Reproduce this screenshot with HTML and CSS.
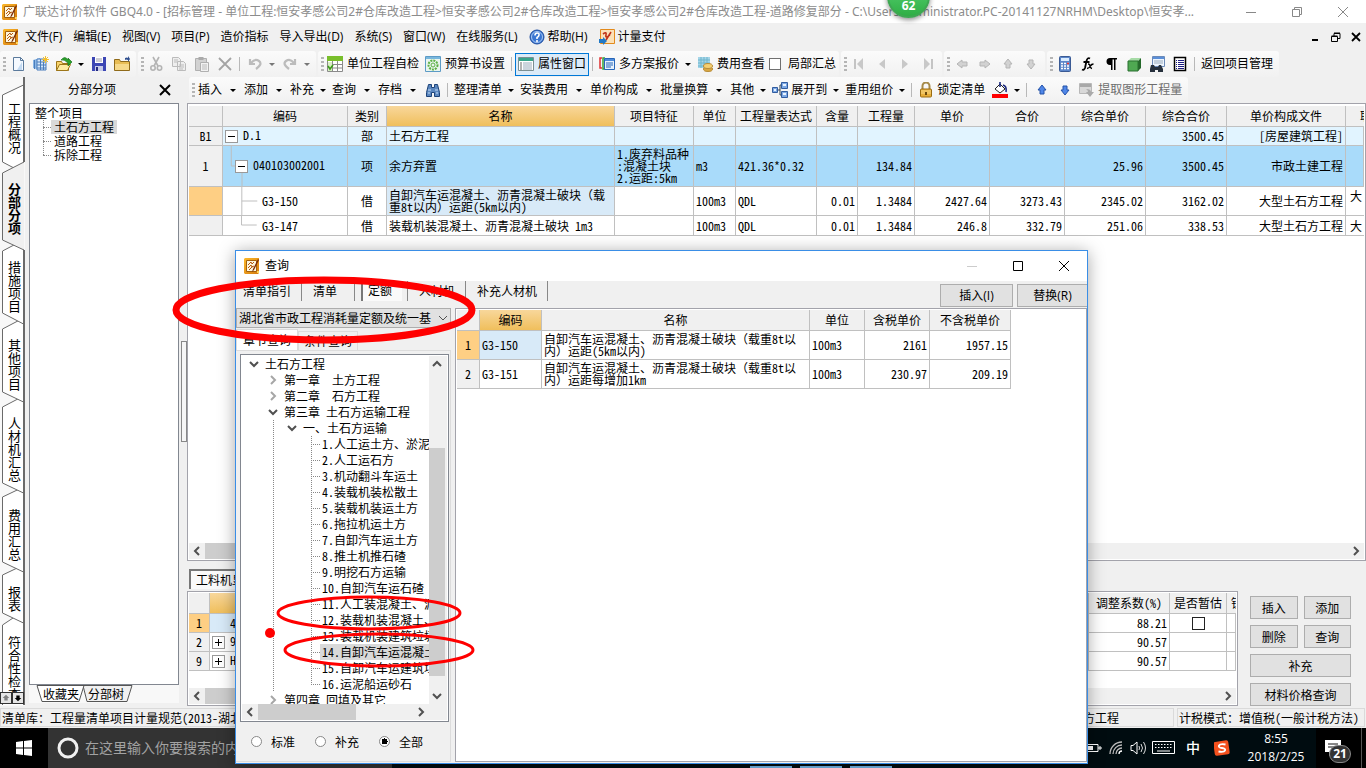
FILE: index.html
```html
<!DOCTYPE html>
<html lang="zh-CN">
<head>
<meta charset="utf-8">
<title>广联达计价软件 GBQ4.0</title>
<link rel="stylesheet" href="styles.css">
</head>
<body>
<svg class="defs" aria-hidden="true">
  <defs>
    <linearGradient id="gold" x1="0" y1="0" x2="1" y2="1"><stop offset="0" stop-color="#fbb829"/><stop offset="1" stop-color="#d67a0e"/></linearGradient>
    <symbol id="i-app" viewBox="0 0 16 16"><path d="M1 0h14v15l-1 1H1L0 15V1z" fill="url(#gold)"/><path d="M2.500 2.500h10v11h-10z" fill="#fdf6df" stroke="#a4600c"/><path d="M4 7l3-3 1 2 2-2M4 10l3-3 1 2 2-1M5 12l4-4" stroke="#b55a10" fill="none"/><path d="M14 1L9 11l-1 3 2-2 5-10z" fill="#7a2a08"/><path d="M13 13h2v2h-2z" fill="#ffd65a"/></symbol>
    <symbol id="i-new" viewBox="0 0 16 16"><path d="M3.500 1.500h7l3 3v10h-10z" fill="#f4f9ff" stroke="#5b7a9c"/><path d="M10.500 1.500v3h3" fill="none" stroke="#5b7a9c"/><path d="M12 6v8H7z" fill="#c3daf2"/></symbol>
    <symbol id="i-grid" viewBox="0 0 16 16"><path d="M0 4l7-2v12l-7-2z" fill="#8ab6e6"/><path d="M4 3h9v11H4z" fill="#d7e8fa" stroke="#4b7dbb"/><path d="M7.500 3v11M10.500 3v11M4 6h9M4 9h9M4 12h9M1.500 4v9" stroke="#4b7dbb"/><path d="M12.500 0v7M9 3.500h7M10 1l5 5M15 1l-5 5" stroke="#f5c02b"/></symbol>
    <symbol id="i-open" viewBox="0 0 16 16"><path d="M.5 14.500V5.500h5l1 2h6v7z" fill="#f8d36b" stroke="#9c7518"/><path d="M.5 14.500l3-6h11l-3 6z" fill="#fdeba0" stroke="#9c7518"/><path d="M5 4q4-5 7 0V2l4 4-4 4V7Q8 3 5 4z" fill="#2ba12b" stroke="#0e6b14" stroke-width=".6"/></symbol>
    <symbol id="i-save" viewBox="0 0 16 16"><path d="M1 1h14v14H1z" fill="#3c46b4"/><path d="M4 1h8v6H4z" fill="#fff"/><path d="M5 3h6M5 5h6" stroke="#99a"/><path d="M4 10h8v5H4z" fill="#c7cbe8"/><path d="M5 11h2v4H5z" fill="#23297e"/></symbol>
    <symbol id="i-folder" viewBox="0 0 16 16"><path d="M.5 14.500v-11h5l1 2h9v9z" fill="#e8bd55" stroke="#8f6a1a"/><path d="M1 8h14v6H1z" fill="#f6d98a"/><path d="M11 2q2-1 3 0V0l2 3-2 3V4q-2-1-3 0z" fill="#2f4f8f"/></symbol>
    <symbol id="i-cut" viewBox="0 0 16 16"><path d="M5 1l5 9M11 1L6 10" stroke="#b4b4b4" stroke-width="1.600"/><circle cx="5" cy="12" r="2.200" fill="none" stroke="#b4b4b4" stroke-width="1.600"/><circle cx="11.500" cy="12" r="2.200" fill="none" stroke="#b4b4b4" stroke-width="1.600"/></symbol>
    <symbol id="i-copy" viewBox="0 0 16 16"><path d="M1.500 1.500h6l2 2v7h-8zM6.500 5.500h6l2 2v7h-8z" fill="#eee" stroke="#bbb"/><path d="M8 9h5M8 11h5M8 13h4M3 4h4M3 6h3" stroke="#bbb"/></symbol>
    <symbol id="i-paste" viewBox="0 0 16 16"><path d="M1.500 2.500h11v12h-11z" fill="#d2d2d2" stroke="#b0b0b0"/><path d="M4.500 1h5v3h-5z" fill="#aaa"/><path d="M6.500 6.500h8v9h-8z" fill="#f2f2f2" stroke="#b0b0b0"/><path d="M8 9h5M8 11h5M8 13h5" stroke="#bbb"/></symbol>
    <symbol id="i-x" viewBox="0 0 16 16"><path d="M2 2l12 12M14 2L2 14" stroke="#a4a4a4" stroke-width="1.800"/></symbol>
    <symbol id="i-undo" viewBox="0 0 16 16"><path d="M3 3v5h5M4 7q4-5 8-2t-3 8" fill="none" stroke="#bcbcbc" stroke-width="2.200"/></symbol>
    <symbol id="i-redo" viewBox="0 0 16 16"><path d="M13 3v5H8M12 7Q8 2 4 5t3 8" fill="none" stroke="#bcbcbc" stroke-width="2.200"/></symbol>
    <symbol id="i-check" viewBox="0 0 16 16"><path d="M.5 4.500h15v11H.5z" fill="#fff" stroke="#8a8a8a"/><path d="M.5 8.500h15M.5 12h15M5.500 5v11M10.500 5v11" fill="none" stroke="#8a8a8a"/><path d="M0 0h16v5H0z" fill="#79bf2c"/><path d="M1 6h4v9H1z" fill="#d9f0c4"/><path d="M1 10l2 3 3-4" fill="none" stroke="#3e9b1c" stroke-width="1.600"/></symbol>
    <symbol id="i-gear" viewBox="0 0 16 16"><path d="M.5.5h15v15H.5z" fill="#e9f5ef" stroke="#5c9bc6"/><path d="M1 1h14v2H1z" fill="#79b7dd"/><circle cx="8" cy="9" r="4.500" fill="none" stroke="#5bb043" stroke-width="2" stroke-dasharray="2 1"/><circle cx="8" cy="9" r="2" fill="none" stroke="#5bb043"/></symbol>
    <symbol id="i-prop" viewBox="0 0 16 16"><path d="M.5 1.500h15v13H.5z" fill="#fff" stroke="#7b8f93"/><path d="M1 2h14v3H1z" fill="#38a58c"/><path d="M2 7h2M2 9h2M2 11h2M2 13h2" stroke="#666"/><path d="M5 7h9M5 9h9M5 11h9M5 13h9" stroke="#9ab"/></symbol>
    <symbol id="i-multi" viewBox="0 0 16 16"><path d="M3 2H1v10h2" fill="none" stroke="#df3030" stroke-width="1.500"/><path d="M6 2H4v11h2" fill="none" stroke="#36a336" stroke-width="1.500"/><path d="M5.500 2.500h10v11h-10z" fill="#e6f1fc" stroke="#2766b8"/><path d="M6 3h9v2H6z" fill="#4d8bdb"/><path d="M7 7h7M7 9h7M7 11h5" stroke="#2766b8"/></symbol>
    <symbol id="i-cost" viewBox="0 0 16 16"><path d="M1 1h12v11H1z" fill="#a5d5e8"/><path d="M1 4h12M1 7h12M1 10h12M4 1v11M7 1v11M10 1v11" stroke="#6eb5cc"/><ellipse cx="11" cy="13" rx="4.500" ry="2.500" fill="#d9a844" stroke="#b98c38"/><ellipse cx="11" cy="10" rx="4.500" ry="2.500" fill="#f3cf72" stroke="#b98c38"/></symbol>
    <symbol id="i-first" viewBox="0 0 16 16"><path d="M4 3v10" stroke="#c4c4c4" stroke-width="2"/><path d="M12 2v12L6 8z" fill="#c8c8c8"/></symbol>
    <symbol id="i-prev" viewBox="0 0 16 16"><path d="M11 3v10L5 8z" fill="#c8c8c8"/></symbol>
    <symbol id="i-next" viewBox="0 0 16 16"><path d="M5 3v10l6-5z" fill="#c8c8c8"/></symbol>
    <symbol id="i-last" viewBox="0 0 16 16"><path d="M12 3v10" stroke="#c4c4c4" stroke-width="2"/><path d="M4 2v12l6-6z" fill="#c8c8c8"/></symbol>
    <symbol id="i-left" viewBox="0 0 16 16"><path d="M3 8l5-4v2h5v4H8v2z" fill="#d2d2d2" stroke="#b5b5b5"/></symbol>
    <symbol id="i-right" viewBox="0 0 16 16"><path d="M13 8L8 4v2H3v4h5v2z" fill="#d2d2d2" stroke="#b5b5b5"/></symbol>
    <symbol id="i-up" viewBox="0 0 16 16"><path d="M8 3l4 5h-2v4H6V8H4z" fill="var(--f,#d2d2d2)" stroke="var(--s,#b5b5b5)"/></symbol>
    <symbol id="i-down" viewBox="0 0 16 16"><path d="M8 13l4-5h-2V4H6v4H4z" fill="var(--f,#d2d2d2)" stroke="var(--s,#b5b5b5)"/></symbol>
    <symbol id="i-calc" viewBox="0 0 16 16"><rect x="2.500" y=".5" width="11" height="15" rx="1" fill="#5c86c9" stroke="#3a5a94"/><path d="M4 2h8v3H4z" fill="#d9ecff"/><path d="M4 7.500h8M4 10h8M4 12.500h8" stroke="#fff" stroke-width="1.500" stroke-dasharray="2 1"/><path d="M10 7.500h2" stroke="#e33" stroke-width="1.500"/></symbol>
    <symbol id="i-fx" viewBox="0 0 16 16"><path d="M10 2.500Q7.500 1 6.500 5L5 12q-1 2.500-3 1.500M3.500 6h6" fill="none" stroke="#000" stroke-width="1.800"/><path d="M8 8q2 0 2 2t2 2.500M13.500 8q-2 0-3 2t-3.500 2.500" fill="none" stroke="#000" stroke-width="1.400"/></symbol>
    <symbol id="i-para" viewBox="0 0 16 16"><path d="M14 2H7a3 3 0 000 7h1v5h1.500V3.500H11V14h1.500V3.500H14z" fill="#000"/></symbol>
    <symbol id="i-cube" viewBox="0 0 16 16"><path d="M2 5l3-3h10l-3 3z" fill="#a6dba6"/><path d="M2 5h10v10H2z" fill="#4fa852"/><path d="M12 5l3-3v10l-3 3z" fill="#24682a"/><path d="M2 5h10v10H2z" fill="none" stroke="#2a7130"/></symbol>
    <symbol id="i-find" viewBox="0 0 16 16"><path d="M3.500.5h12v10h-12z" fill="#edf4fd" stroke="#6b8ab8"/><path d="M4 1h11v2H4z" fill="#5b8fd8"/><path d="M5 5h9M5 7h9" stroke="#9ab"/><path d="M2 9h3l1 2h3l1-2h2l2 4v3H9v-2H6v2H1v-3z" fill="#26303c"/></symbol>
    <symbol id="i-doc" viewBox="0 0 16 16"><path d="M2.500 1.500h11v13h-11z" fill="#fff" stroke="#000" stroke-width="1.500"/><path d="M4 4.500h1M4 6.500h1M4 8.500h1M4 10.500h1M4 12.500h1M6 4.500h6M6 6.500h6M6 8.500h6M6 10.500h6M6 12.500h6" stroke="#1b1b80"/></symbol>
    <symbol id="i-bino" viewBox="0 0 16 16"><path d="M3.500 2.500h3v3h3v-3h3l2 8v4h-5v-4h-3v4h-5v-4z" fill="#5b87bf" stroke="#1d4379"/><path d="M3 8h3M10 8h3M3 11h2M11 11h2" stroke="#c4dcf6"/></symbol>
    <symbol id="i-tree" viewBox="0 0 16 16"><path d="M5 8h3M8 3v10M8 3h2M8 13h2" stroke="#345" fill="none"/><path d="M.5 5.500h5v5h-5zM9.500.5h6v6h-6zM9.500 9.500h6v6h-6z" fill="#7da9e4" stroke="#315c9f"/><path d="M11 2h3v2h-3zM11 11h3v2h-3zM2 7h2v2H2z" fill="#eaf3ff"/></symbol>
    <symbol id="i-lock" viewBox="0 0 16 16"><path d="M4.500 8V4a3.500 3.500 0 017 0v4" fill="none" stroke="#a58a4a" stroke-width="2"/><rect x="2.500" y="7" width="11" height="8" rx="1" fill="#e8ae3a" stroke="#9a6c12"/><path d="M3 9h10M3 11h10" stroke="#f8da8a"/><path d="M7 10h2v3H7z" fill="#6b480b"/></symbol>
    <symbol id="i-fill" viewBox="0 0 16 16"><path d="M3 7l5-5 5 5-5 4z" fill="#fff" stroke="#222"/><path d="M8 5V0M11 3q4 1 3 7" fill="none" stroke="#1b2a80" stroke-width="1.600"/><path d="M0 12h16v4H0z" fill="#f00"/></symbol>
    <symbol id="i-extract" viewBox="0 0 16 16"><path d="M.5 1.500h12v10H.5z" fill="#d8d8d8" stroke="#b8b8b8"/><path d="M1 2h11v3H1z" fill="#a8a8a8"/><path d="M7 7q5 0 5 3h3l-4 5-4-5h2q0-2-2-3z" fill="#aaa"/></symbol>
    <symbol id="i-help" viewBox="0 0 16 16"><circle cx="8" cy="8" r="7" fill="#3a76d2" stroke="#1f4d9f"/><circle cx="8" cy="8" r="5.500" fill="none" stroke="#a8c8f4"/><path d="M6 6.500q0-2.500 2.200-2.500T10 6t-2 2.500V10M8 11v2" stroke="#fff" stroke-width="1.600" fill="none"/></symbol>
    <symbol id="i-pay" viewBox="0 0 16 16"><path d="M1.500.5h14v14h-14z" fill="#fbe1b8" stroke="#e38a1c"/><path d="M4 5q4-3 3 1t4 0M12 3l-5 8" stroke="#c03318" stroke-width="1.600" fill="none"/><path d="M0 10h4V8l4 4-4 4v-2H0z" fill="#2179c6"/></symbol>
    <symbol id="c-left" viewBox="0 0 16 16"><path d="M10 4L6 8l4 4" fill="none" stroke="#505050" stroke-width="2"/></symbol>
    <symbol id="c-right" viewBox="0 0 16 16"><path d="M6 4l4 4-4 4" fill="none" stroke="var(--c,#505050)" stroke-width="2"/></symbol>
    <symbol id="c-up" viewBox="0 0 16 16"><path d="M4 10l4-4 4 4" fill="none" stroke="#505050" stroke-width="2"/></symbol>
    <symbol id="c-down" viewBox="0 0 16 16"><path d="M4 6l4 4 4-4" fill="none" stroke="#505050" stroke-width="var(--w,2)"/></symbol>
  </defs>
</svg>

<header class="titlebar">
  <svg class="ic"><use href="#i-app"/></svg>
  <span class="title">广联达计价软件 GBQ4.0 - [招标管理 - 单位工程:恒安孝感公司2#仓库改造工程&gt;恒安孝感公司2#仓库改造工程&gt;恒安孝感公司2#仓库改造工程-道路修复部分 - C:\Users\Administrator.PC-20141127NRHM\Desktop\恒安孝...</span>
  <div class="winbtns">
    <button aria-label="最小化"><svg viewBox="0 0 12 12"><path d="M1 6.500h10" stroke="#888"/></svg></button>
    <button aria-label="还原"><svg viewBox="0 0 12 12"><path d="M1.500 3.500h7v7h-7zM3.500 3.500v-2h7v7h-2" fill="none" stroke="#888"/></svg></button>
    <button aria-label="关闭"><svg viewBox="0 0 12 12"><path d="M1 1l10 10M11 1L1 11" stroke="#888"/></svg></button>
  </div>
</header>
<div class="ball">62</div>

<nav class="menubar">
  <svg class="ic"><use href="#i-app"/></svg>
  <button>文件(F)</button><button>编辑(E)</button><button>视图(V)</button><button>项目(P)</button><button>造价指标</button><button>导入导出(D)</button><button>系统(S)</button><button>窗口(W)</button><button>在线服务(L)</button>
  <button><svg class="ic"><use href="#i-help"/></svg>帮助(H)</button>
  <button><svg class="ic"><use href="#i-pay"/></svg>计量支付</button>
  <div class="mdi">
    <button aria-label="最小化"><svg viewBox="0 0 10 10"><path d="M1 8h6" stroke="#000" stroke-width="2"/></svg></button>
    <button aria-label="还原"><svg viewBox="0 0 10 10"><path d="M.5 4.500h6v5h-6zM3 4V1.500h6v5H7M.5 4h6M3 1h6" fill="none" stroke="#000"/></svg></button>
    <button aria-label="关闭"><svg viewBox="0 0 10 10"><path d="M1 1l8 8M9 1L1 9" stroke="#000" stroke-width="1.800"/></svg></button>
  </div>
</nav>

<div class="toolbar">
  <div class="group">
    <i class="grip"></i>
    <button class="tool" aria-label="新建"><svg class="ic"><use href="#i-new"/></svg></button>
    <button class="tool" aria-label="新建表"><svg class="ic"><use href="#i-grid"/></svg></button>
    <button class="tool" aria-label="打开"><svg class="ic"><use href="#i-open"/></svg></button>
    <i class="drop"></i>
    <button class="tool" aria-label="保存"><svg class="ic"><use href="#i-save"/></svg></button>
    <button class="tool" aria-label="文件夹"><svg class="ic"><use href="#i-folder"/></svg></button>
  </div>
  <div class="group">
    <i class="grip"></i>
    <button class="tool" aria-label="剪切"><svg class="ic"><use href="#i-cut"/></svg></button>
    <button class="tool" aria-label="复制"><svg class="ic"><use href="#i-copy"/></svg></button>
    <button class="tool" aria-label="粘贴"><svg class="ic"><use href="#i-paste"/></svg></button>
    <button class="tool" aria-label="删除"><svg class="ic"><use href="#i-x"/></svg></button>
    <i class="sep"></i>
    <button class="tool" aria-label="撤销"><svg class="ic"><use href="#i-undo"/></svg></button><i class="drop dim"></i>
    <button class="tool" aria-label="重做"><svg class="ic"><use href="#i-redo"/></svg></button><i class="drop dim"></i>
  </div>
  <div class="group">
    <i class="grip"></i>
    <button class="label"><svg class="ic"><use href="#i-check"/></svg>单位工程自检</button>
    <button class="label"><svg class="ic"><use href="#i-gear"/></svg>预算书设置</button>
    <i class="sep"></i>
    <button class="label active"><svg class="ic"><use href="#i-prop"/></svg>属性窗口</button>
    <i class="sep"></i>
    <button class="label"><svg class="ic"><use href="#i-multi"/></svg>多方案报价</button><i class="drop"></i>
    <button class="label"><svg class="ic"><use href="#i-cost"/></svg>费用查看</button>
    <label class="check"><input type="checkbox">局部汇总</label>
  </div>
  <div class="group">
    <i class="grip"></i>
    <button class="tool" aria-label="首条"><svg class="ic"><use href="#i-first"/></svg></button>
    <button class="tool" aria-label="上一条"><svg class="ic"><use href="#i-prev"/></svg></button>
    <button class="tool" aria-label="下一条"><svg class="ic"><use href="#i-next"/></svg></button>
    <button class="tool" aria-label="末条"><svg class="ic"><use href="#i-last"/></svg></button>
  </div>
  <div class="group">
    <i class="grip"></i>
    <button class="tool" aria-label="左移"><svg class="ic"><use href="#i-left"/></svg></button>
    <button class="tool" aria-label="右移"><svg class="ic"><use href="#i-right"/></svg></button>
    <button class="tool" aria-label="上移"><svg class="ic"><use href="#i-up"/></svg></button>
    <button class="tool" aria-label="下移"><svg class="ic"><use href="#i-down"/></svg></button>
  </div>
  <div class="group">
    <i class="grip"></i>
    <button class="tool" aria-label="计算器"><svg class="ic"><use href="#i-calc"/></svg></button>
    <button class="tool" aria-label="函数"><svg class="ic"><use href="#i-fx"/></svg></button>
    <button class="tool" aria-label="段落"><svg class="ic"><use href="#i-para"/></svg></button>
    <button class="tool" aria-label="图元"><svg class="ic"><use href="#i-cube"/></svg></button>
    <button class="tool" aria-label="查找"><svg class="ic"><use href="#i-find"/></svg></button>
    <button class="tool" aria-label="文档"><svg class="ic"><use href="#i-doc"/></svg></button>
    <i class="sep"></i>
    <button class="label">返回项目管理</button>
  </div>
</div>

<main class="workspace">
  <nav class="sidetabs">
    <svg class="tabshapes" viewBox="0 0 25 628" aria-hidden="true">
      <g fill="#fff" stroke="#6a6a6a">
        <path d="M23.500 534L2.500 548V640H23.500z"/>
        <path d="M23.500 488L2.500 498V536L23.500 546z"/>
        <path d="M23.500 410L2.500 420V485L23.500 495z"/>
        <path d="M23.500 319L2.500 330V406L23.500 416z"/>
        <path d="M23.500 241L2.500 252V315L23.500 325z"/>
        <path d="M23.500 163L2.500 174V236L23.500 247z"/>
        <path d="M23.500 8L2.500 18V85L23.500 96z"/>
      </g>
      <path d="M24 85L2.500 96V163L24 173" fill="#f0f0f0" stroke="#6a6a6a"/>
      <path d="M24 0V85M24 173V628" stroke="#6a6a6a" stroke-width="2"/>
    </svg>
    <button class="t1">工程概况</button><button class="t2 on">分部分项</button><button class="t3">措施项目</button><button class="t3">其他项目</button><button class="t5">人材机汇总</button><button class="t2">费用汇总</button><button class="t7">报表</button><button class="t8">符合性检查</button>
    <div class="spin"><button aria-label="上"><svg viewBox="0 0 12 12"><path d="M6 2l4 4H8v3H4V6H2z" fill="#808080"/></svg></button><button aria-label="下"><svg viewBox="0 0 12 12"><path d="M6 10l4-4H8V3H4v3H2z" fill="#000"/></svg></button></div>
  </nav>

  <aside class="project">
    <div class="phead"><h2>分部分项</h2><button aria-label="关闭"><svg viewBox="0 0 12 12"><path d="M1 1l10 10M11 1L1 11" stroke="#000" stroke-width="2"/></svg></button></div>
    <div class="ptree">
      <div>整个项目</div>
      <ul><li><span class="sel">土石方工程</span></li><li><span>道路工程</span></li><li><span>拆除工程</span></li></ul>
    </div>
    <div class="ptabs">
      <svg viewBox="0 0 150 18" aria-hidden="true"><path d="M54 .5l4 16h40l5-16z" fill="#f0f0f0" stroke="#555"/><path d="M8 .5l5 16h37l5-16z" fill="#fff" stroke="#555"/></svg>
      <button>收藏夹</button><button>分部树</button>
    </div>
  </aside>
  <div class="splitter"><i></i></div>

  <section class="content">
    <div class="toolbar">
      <div class="group">
        <i class="grip"></i>
        <button class="label">插入</button><i class="drop wide"></i>
        <button class="label">添加</button><i class="drop wide"></i>
        <button class="label">补充</button><i class="drop"></i>
        <button class="label">查询</button><i class="drop wide"></i>
        <button class="label">存档</button><i class="drop wide"></i>
        <button class="tool" aria-label="查找"><svg class="ic"><use href="#i-bino"/></svg></button>
        <i class="sep"></i>
        <button class="label">整理清单</button><i class="drop"></i>
        <button class="label">安装费用</button><i class="drop wide"></i>
        <button class="label">单价构成</button><i class="drop wide"></i>
        <button class="label">批量换算</button><i class="drop wide"></i>
        <button class="label">其他</button><i class="drop"></i>
        <button class="label"><svg class="ic"><use href="#i-tree"/></svg>展开到</button><i class="drop"></i>
        <button class="label">重用组价</button><i class="drop"></i>
        <i class="sep"></i>
        <button class="label"><svg class="ic"><use href="#i-lock"/></svg>锁定清单</button>
        <button class="tool" aria-label="填充颜色"><svg class="ic"><use href="#i-fill"/></svg></button><i class="drop"></i>
        <i class="sep"></i>
        <button class="tool blue" aria-label="上移"><svg class="ic"><use href="#i-up"/></svg></button>
        <button class="tool blue" aria-label="下移"><svg class="ic"><use href="#i-down"/></svg></button>
        <button class="label gray"><svg class="ic"><use href="#i-extract"/></svg>提取图形工程量</button>
      </div>
    </div>

    <div class="frame main">
      <table class="grid">
        <colgroup><col style="width:34px"><col style="width:125px"><col style="width:39px"><col style="width:228px"><col style="width:79px"><col style="width:42px"><col style="width:81px"><col style="width:41px"><col style="width:57px"><col style="width:75px"><col style="width:75px"><col style="width:81px"><col style="width:81px"><col style="width:119px"><col></colgroup>
        <thead><tr><th></th><th>编码</th><th>类别</th><th class="hot">名称</th><th>项目特征</th><th>单位</th><th>工程量表达式</th><th>含量</th><th>工程量</th><th>单价</th><th>合价</th><th>综合单价</th><th>综合合价</th><th>单价构成文件</th><th class="cut far">取</th></tr></thead>
        <tbody>
          <tr class="part"><th>B1</th><td class="code"><i class="box minus"></i>D.1</td><td class="c">部</td><td>土石方工程</td><td></td><td></td><td></td><td></td><td></td><td></td><td></td><td></td><td class="r">3500.45</td><td class="r">[房屋建筑工程]</td><td></td></tr>
          <tr class="item"><th>1</th><td class="code l2"><svg class="branch" viewBox="0 0 30 41"><path d="M8.500 0v20.500h5M19.500 27v14" fill="none" stroke="#bdbdbd"/></svg><i class="box minus"></i>040103002001</td><td class="c">项</td><td>余方弃置</td><td>1.废弃料品种<br>:混凝土块<br>2.运距:5km</td><td>m3</td><td>421.36*0.32</td><td></td><td class="r">134.84</td><td></td><td></td><td class="r">25.96</td><td class="r">3500.45</td><td class="r">市政土建工程</td><td></td></tr>
          <tr class="sub"><th class="cur"></th><td class="code l3"><svg class="branch" viewBox="0 0 40 29"><path d="M19.500 0v29M19.500 14.500h16" fill="none" stroke="#bdbdbd"/></svg>G3-150</td><td class="c">借</td><td class="sel">自卸汽车运混凝土、沥青混凝土破块（载<br>重8t以内）运距(5km以内)</td><td></td><td>100m3</td><td>QDL</td><td class="r">0.01</td><td class="r">1.3484</td><td class="r">2427.64</td><td class="r">3273.43</td><td class="r">2345.02</td><td class="r">3162.02</td><td class="r">大型土石方工程</td><td class="cut top">大</td></tr>
          <tr class="last"><th></th><td class="code l3"><svg class="branch" viewBox="0 0 40 20"><path d="M19.500 0v9.500h16" fill="none" stroke="#bdbdbd"/></svg>G3-147</td><td class="c">借</td><td>装载机装混凝土、沥青混凝土破块 1m3</td><td></td><td>100m3</td><td>QDL</td><td class="r">0.01</td><td class="r">1.3484</td><td class="r">246.8</td><td class="r">332.79</td><td class="r">251.06</td><td class="r">338.53</td><td class="r">大型土石方工程</td><td class="cut">大</td></tr>
        </tbody>
      </table>
      <div class="hscroll"><svg class="ic"><use href="#c-left"/></svg><i></i><svg class="ic"><use href="#c-right"/></svg></div>
    </div>

    <div class="lower">
      <div class="detail">
        <button class="dtab">工料机显示</button>
        <div class="frame">
          <table class="grid">
            <colgroup><col style="width:21px"><col><col style="width:81px"><col style="width:57px"><col style="width:9px"></colgroup>
            <thead><tr><th></th><th class="hot"></th><th>调整系数(%)</th><th>是否暂估</th><th class="cut">锁</th></tr></thead>
            <tbody>
              <tr><th class="cur">1</th><td class="sel in">4</td><td class="r">88.21</td><td class="c"><input type="checkbox" aria-label="是否暂估"></td><td></td></tr>
              <tr><th>2</th><td><i class="box plus"></i>9</td><td class="r">90.57</td><td></td><td></td></tr>
              <tr><th>9</th><td><i class="box plus"></i>H</td><td class="r">90.57</td><td></td><td></td></tr>
            </tbody>
          </table>
          <div class="hscroll"><svg class="ic"><use href="#c-left"/></svg><i></i><svg class="ic"><use href="#c-right"/></svg></div>
        </div>
      </div>
      <div class="actions"><button>插入</button><button>添加</button><button>删除</button><button>查询</button><button class="full">补充</button><button class="full">材料价格查询</button></div>
    </div>
  </section>
</main>

<footer class="status"><span>清单库：工程量清单项目计量规范(2013-湖北)</span><span class="mid">专业：大型土石方工程</span><span class="tax">计税模式：增值税(一般计税方法)</span></footer>

<footer class="taskbar">
  <button class="start" aria-label="开始"><svg viewBox="0 0 16 16"><path d="M0 2l7-1v6.500H0zM8 1l8-1v7.500H8zM0 8.500h7V15l-7-1zM8 8.500h8V16l-8-1z" fill="#fff"/></svg></button>
  <label class="search"><svg viewBox="0 0 22 22"><circle cx="11" cy="11" r="9" fill="none" stroke="#f0f0f0" stroke-width="3"/></svg><input type="text" placeholder="在这里输入你要搜索的内容" aria-label="搜索"></label>
  <div class="running"><i></i><i></i><i></i></div>
  <div class="tray">
    <svg viewBox="0 0 16 16"><path d="M0 4.500h12v7H0zM13 7h2v2h-2z" fill="none" stroke="#fff"/><path d="M2 6h5v4H2z" fill="#fff"/></svg>
    <svg viewBox="0 0 16 16"><g fill="none" stroke="#bbb" stroke-width="1.300"><path d="M2 14A12 12 0 0114 2"/><path d="M5 14a9 9 0 019-9"/><path d="M8 14a6 6 0 016-6"/><path d="M11 14a3 3 0 013-3" stroke="#fff"/></g></svg>
    <svg viewBox="0 0 16 16"><path d="M1 5.500h2l4-3.500v12L3 10.500H1z" fill="none" stroke="#fff"/><path d="M9 6q1 2 0 4M11 4q3 4 0 8M13.500 2q4 6 0 12" fill="none" stroke="#ddd"/></svg>
    <svg class="kbd" viewBox="0 0 24 14"><path d="M.5.500h22v12H.5z" fill="none" stroke="#fff"/><path d="M3 3.500h18M3 6.500h18" stroke="#fff" stroke-dasharray="1.500 1.500"/><path d="M5 10h13" stroke="#fff"/></svg>
    <b>中</b>
    <svg viewBox="0 0 16 16"><rect x="0" y="1" width="15" height="14" rx="2" fill="#f4511e" transform="rotate(-8 8 8)"/><path d="M11.500 4.500Q6 3.500 5 5.500T8 8t3 2.500-6.500 1" fill="none" stroke="#fff" stroke-width="1.800"/></svg>
    <time>8:55<br>2018/2/25</time>
  </div>
  <button class="notes" aria-label="通知"><svg viewBox="0 0 16 16"><path d="M0 0h16v12H8l-4 4v-4H0z" fill="#fff"/><path d="M3 4h10M3 7h10" stroke="#111"/></svg><em>21</em></button>
</footer>

<section class="dialog" role="dialog" aria-label="查询">
  <div class="dtitle"><svg class="ic"><use href="#i-app"/></svg><span>查询</span>
    <div class="winbtns">
      <button aria-label="最小化"><svg viewBox="0 0 12 12"><path d="M1 6.500h10" stroke="#ccc"/></svg></button>
      <button aria-label="最大化"><svg viewBox="0 0 12 12"><path d="M1.500 1.500h9v9h-9z" fill="none" stroke="#000"/></svg></button>
      <button aria-label="关闭"><svg viewBox="0 0 12 12"><path d="M1 1l10 10M11 1L1 11" stroke="#000"/></svg></button>
    </div>
  </div>
  <div class="dtabs">
    <button>清单指引</button><button>清单</button><button class="on"><span>定额</span></button><button>人材机</button><button>补充人材机</button>
    <div class="cmds"><button>插入(I)</button><button>替换(R)</button></div>
  </div>
  <div class="dbody">
    <div class="dleft">
      <div class="combo"><select aria-label="定额库"><option>湖北省市政工程消耗量定额及统一基</option></select><svg viewBox="0 0 16 16"><use href="#c-down"/></svg></div>
      <div class="qtabs"><button class="on">章节查询</button><button>条件查询</button></div>
      <div class="qpanel">
        <div class="treebox">
          <div class="tree">
            <ul>
              <li><div class="row"><svg class="ic"><use href="#c-down"/></svg>土石方工程</div>
                <ul class="lv1">
                  <li><div class="row shut"><svg class="ic"><use href="#c-right"/></svg>第一章　土方工程</div></li>
                  <li><div class="row shut"><svg class="ic"><use href="#c-right"/></svg>第二章　石方工程</div></li>
                  <li><div class="row"><svg class="ic"><use href="#c-down"/></svg>第三章 土石方运输工程</div>
                    <ul class="lv2"><li><div class="row"><svg class="ic"><use href="#c-down"/></svg>一、土石方运输</div>
                      <ul class="lv3">
                        <li><span>1.人工运土方、淤泥</span></li><li><span>2.人工运石方</span></li><li><span>3.机动翻斗车运土</span></li><li><span>4.装载机装松散土</span></li><li><span>5.装载机装运土方</span></li><li><span>6.拖拉机运土方</span></li><li><span>7.自卸汽车运土方</span></li><li><span>8.推土机推石碴</span></li><li><span>9.明挖石方运输</span></li><li><span>10.自卸汽车运石碴</span></li><li><span>11.人工装混凝土、沥青</span></li><li><span>12.装载机装混凝土、</span></li><li><span>13.装载机装建筑垃圾</span></li><li><span class="sel">14.自卸汽车运混凝土</span></li><li><span>15.自卸汽车运建筑垃圾</span></li><li><span>16.运泥船运砂石</span></li>
                      </ul></li></ul></li>
                  <li><div class="row shut"><svg class="ic"><use href="#c-right"/></svg>第四章 回填及其它</div></li>
                </ul></li>
            </ul>
          </div>
          <div class="vscroll"><svg class="ic"><use href="#c-up"/></svg><i></i><svg class="ic"><use href="#c-down"/></svg></div>
          <div class="hscroll"><svg class="ic"><use href="#c-left"/></svg><i></i><svg class="ic"><use href="#c-right"/></svg></div>
        </div>
        <div class="radios"><label><input type="radio" name="scope">标准</label><label><input type="radio" name="scope">补充</label><label><input type="radio" name="scope" checked>全部</label></div>
      </div>
    </div>
    <div class="frame dright">
      <table class="grid">
        <colgroup><col style="width:23px"><col style="width:62px"><col style="width:268px"><col style="width:55px"><col style="width:65px"><col style="width:81px"></colgroup>
        <thead><tr><th></th><th class="hot">编码</th><th>名称</th><th>单位</th><th>含税单价</th><th>不含税单价</th></tr></thead>
        <tbody>
          <tr class="sub"><th class="cur">1</th><td class="sel">G3-150</td><td>自卸汽车运混凝土、沥青混凝土破块（载重8t以<br>内）运距(5km以内)</td><td>100m3</td><td class="r">2161</td><td class="r">1957.15</td></tr>
          <tr class="sub"><th>2</th><td>G3-151</td><td>自卸汽车运混凝土、沥青混凝土破块（载重8t以<br>内）运距每增加1km</td><td>100m3</td><td class="r">230.97</td><td class="r">209.19</td></tr>
        </tbody>
      </table>
    </div>
  </div>
</section>

<svg class="marks" viewBox="0 0 320 410" aria-hidden="true">
  <g fill="none" stroke="#f00"><ellipse cx="154" cy="40" rx="148" ry="30" stroke-width="7"/><ellipse cx="199" cy="343" rx="91" ry="16" stroke-width="3"/><ellipse cx="209" cy="380" rx="94" ry="16" stroke-width="3"/></g>
  <circle cx="100" cy="363" r="5" fill="#f00"/>
</svg>
</body>
</html>
```
FILE: styles.css
```css
* { box-sizing: border-box; }
:root {
  --ui: "Open Sans", "Noto Sans CJK SC", sans-serif;
  --song: "Noto Sans Mono CJK SC", "Noto Sans CJK SC", sans-serif;
  --face: #f0f0f0;
  --line: #c0c0c0;
}
body {
  margin: 0;
  height: 100vh;
  display: flex;
  flex-direction: column;
  position: relative;
  overflow: hidden;
  background: var(--face);
  color: #000;
  font: 12px/16px var(--ui);
}
button, input, select { font: inherit; color: inherit; margin: 0; }
button { border: 0; background: none; padding: 0; white-space: nowrap; }
ul { list-style: none; margin: 0; padding: 0; }
svg { display: block; flex: none; }
.defs { position: absolute; width: 0; height: 0; }
.ic { width: 16px; height: 16px; }

/* title and menu */
.titlebar { height: 23px; flex: none; background: #fff; display: flex; align-items: center; gap: 5px; padding-left: 2px; color: #8c8c8c; }
.title { flex: 1; overflow: hidden; white-space: nowrap; font-family: "Noto Sans", "Noto Sans CJK SC", sans-serif; }
.winbtns { margin-left: auto; display: flex; }
.winbtns button { width: 46px; display: flex; justify-content: center; }
.winbtns svg { width: 12px; height: 12px; }
.ball { position: absolute; left: 887px; top: -25px; width: 43px; height: 43px; border-radius: 50%; background: linear-gradient(#5fd87a, #2fae45); border: 2px solid #3fa653; box-shadow: 0 2px 5px rgba(0,0,0,.45); color: #fff; font-weight: 700; text-align: center; padding-top: 21px; z-index: 2; }
.menubar { height: 28px; flex: none; display: flex; align-items: center; gap: 11px; padding-left: 3px; }
.menubar > .ic { margin-right: -5px; }
.menubar button { display: flex; align-items: center; gap: 3px; }
.mdi { margin-left: auto; display: flex; gap: 10px; padding-right: 5px; }
.mdi svg { width: 10px; height: 10px; }

/* toolbars */
.toolbar { height: 26px; flex: none; display: flex; gap: 2px; }
.content .toolbar { padding-left: 2px; }
.group { display: flex; align-items: center; background: linear-gradient(#fbfbfb, #f1f1f1); border-radius: 3px; padding-right: 3px; }
.grip { width: 3px; height: 14px; margin-left: 3px; background: repeating-linear-gradient(#b5b5b5 0 2px, transparent 2px 4px); }
.tool { width: 23px; height: 22px; display: flex; align-items: center; justify-content: center; }
.blue { --f: #4f86e8; --s: #2452a8; }
.label { height: 23px; padding: 0 3px; display: flex; align-items: center; gap: 4px; }
.content .label { gap: 3px; }
.active { border: 1px solid #0078d7; background: #dcebf8; padding: 0 2px; }
.gray { color: #6d6d6d; }
.sep { width: 1px; height: 14px; margin: 0 3px; background: #b8b8b8; }
.drop { width: 12px; display: flex; justify-content: center; }
.drop.wide { width: 16px; }
.drop::before { content: ""; border: 3px solid transparent; border-top-color: #000; border-bottom: 0; }
.drop.dim::before { border-top-color: #777; }
.check { display: flex; align-items: center; gap: 7px; padding-left: 1px; }
input[type=checkbox] { appearance: none; width: 12px; height: 12px; border: 1px solid #707070; background: #fff; }

/* workspace */
.workspace { flex: 1; min-height: 0; display: flex; }
.sidetabs { width: 25px; position: relative; display: flex; flex-direction: column; overflow: hidden; padding-top: 8px; background: #f8f8f8; font: 13px/13px var(--song); }
.tabshapes { position: absolute; left: 0; top: 0; width: 25px; height: 628px; }
.sidetabs > button { position: relative; width: 25px; flex: none; padding: 0 4px 0 8px; white-space: normal; word-break: break-all; }
.t1 { height: 83px; }
.t2 { height: 79px; }
.t3 { height: 78px; }
.t5 { height: 91px; }
.t7 { height: 50px; }
.t8 { height: 88px; }
.on { font-weight: 700; }
.spin { position: absolute; left: 0; bottom: 2px; display: flex; }
.spin button { width: 12px; height: 12px; border: 1px solid #333; background: #e6e6e6; }
.spin svg { width: 10px; height: 10px; }

.project { width: 155px; display: flex; flex-direction: column; padding: 0 1px 3px 4px; font: 12px/14px var(--song); }
.phead { height: 26px; display: flex; align-items: center; justify-content: flex-end; gap: 43px; padding-right: 8px; }
.phead h2 { margin: 0; font: 12px/16px var(--ui); }
.phead svg { width: 12px; height: 12px; }
.ptree { flex: 1; background: #fff; border: 1px solid #828790; padding: 2px 5px; }
.ptree ul { margin-left: 8px; background: repeating-linear-gradient(#888 0 1px, transparent 1px 2px) left top / 1px 36px no-repeat; }
.ptree li { display: flex; align-items: center; height: 14px; }
.ptree li::before { content: ""; width: 8px; border-top: 1px dotted #888; }
.ptree span { padding: 0 3px; }
.ptree .sel, .tree .sel { background: #d9d9d9; }
.ptabs { height: 18px; position: relative; display: flex; gap: 9px; padding-left: 14px; background: #f8f8f8; }
.ptabs svg { position: absolute; left: 0; top: 0; width: 150px; height: 18px; }
.ptabs button { position: relative; }
.splitter { width: 7px; display: flex; align-items: center; justify-content: center; }
.splitter i { width: 6px; height: 101px; border: 1px solid #888; background: #f6f6f6; }

.content { flex: 1; min-width: 0; display: flex; flex-direction: column; }
.frame { border: 1px solid #a3a3ab; padding: 1px; background: #fff; display: flex; flex-direction: column; overflow: hidden; }
.main { flex: 1; min-height: 0; padding-top: 2px; }
.grid { width: 100%; table-layout: fixed; border-spacing: 0; font: 12px/12px var(--song); }
.grid th, .grid td { border: solid var(--line); border-width: 0 1px 1px 0; padding: 0 2px; height: 19px; overflow: hidden; white-space: nowrap; }
.grid th { background: var(--face); font-weight: 400; text-align: center; padding: 0; }
.grid thead th { height: 21px; }
.grid .cut { padding: 0 0 0 4px; border-right: 0; text-align: left; text-overflow: clip; }
.grid .far { padding-left: 14px; }
.grid .top { vertical-align: top; padding-top: 3px; }
.grid .hot { background: linear-gradient(#f8d79b, #f0bf5c); }
.grid .cur { background: #fecf84; }
.grid .sel { background: #d8eaf8; }
.grid .in { padding-left: 20px; }
.grid .r { text-align: right; }
.grid .c { text-align: center; }
.part td { background: #e1f4ff; }
.item td, .item th { height: 41px; }
.item td { background: #a9dbfa; }
.sub td, .sub th { height: 29px; }
.last td, .last th { height: 20px; }
.code { position: relative; }
.l2.code { padding-left: 12px; }
.l3.code { padding-left: 39px; }
.branch { position: absolute; left: 0; top: 0; height: 100%; }
.box { display: inline-block; position: relative; width: 13px; height: 13px; border: 1px solid #999; margin-right: 5px; vertical-align: middle; background: linear-gradient(#000, #000) center / 7px 1px no-repeat #fff; }
.plus { background: linear-gradient(#000, #000) center / 7px 1px no-repeat, linear-gradient(#000, #000) center / 1px 7px no-repeat #fff; }
.grid input { width: 13px; height: 13px; border-color: #222; display: block; margin: auto; }
.hscroll { height: 16px; flex: none; margin-top: auto; display: flex; background: var(--face); }
.hscroll i { width: 48px; background: #cdcdcd; }
.hscroll .ic:last-child { margin-left: auto; }

.lower { display: flex; height: 145px; flex: none; }
.detail { flex: 1; min-width: 0; display: flex; flex-direction: column; align-items: stretch; padding: 8px 0 0; }
.dtab { align-self: flex-start; height: 20px; margin: 0 0 2px 2px; padding: 0 5px; border: solid #777; border-width: 2px 1px 0 2px; background: #fafafa; font-family: var(--song); }
.detail .frame { flex: 1; }
.actions { width: 128px; padding: 35px 15px 0 12px; display: grid; grid-template-columns: 1fr 1fr; gap: 6px; align-content: start; }
.actions button, .cmds button { height: 23px; border: 1px solid #adadad; background: #e1e1e1; font-family: var(--song); }
.full { grid-column: 1 / 3; }

.status { height: 22px; flex: none; display: flex; gap: 3px; padding: 2px 1px 1px 0; font-family: var(--song); white-space: nowrap; }
.status span { border: 1px solid #dadada; padding: 0 1px; line-height: 18px; }
.status span:first-child { flex: 1; }
.status .mid { width: 177px; }
.status .tax { width: 188px; }

.taskbar { height: 40px; flex: none; display: flex; background: #000c10; color: #fff; }
.start { width: 48px; background: #000; display: flex; align-items: center; justify-content: center; }
.start svg { width: 16px; height: 16px; }
.search { width: 344px; background: #333; display: flex; align-items: center; gap: 4px; padding-left: 9px; }
.search svg { width: 22px; height: 22px; }
.search input { flex: 1; min-width: 0; border: 0; background: none; font-size: 14px; }
.search input::placeholder { color: #a2a2a2; opacity: 1; }
.running { flex: 1; display: flex; align-items: flex-end; justify-content: flex-end; gap: 8px; padding-right: 194px; }
.running i { width: 42px; height: 2px; background: #76b9ed; }
.tray { display: flex; align-items: center; gap: 6px; }
.tray svg { width: 16px; height: 16px; }
.tray .kbd { width: 24px; height: 14px; }
.tray b { font-size: 14px; font-weight: 500; margin: 0 8px 0 4px; }
.tray time { width: 80px; line-height: 18px; text-align: center; }
.notes { width: 50px; background: #000; position: relative; padding-left: 9px; }
.notes::after { content: ""; position: absolute; right: 4px; top: 0; bottom: 0; border-left: 1px solid #555; }
.notes svg { width: 16px; height: 16px; }
.notes em { position: absolute; left: 13px; top: 17px; width: 22px; height: 18px; border: 1px solid #888; border-radius: 9px; background: #333; font: 700 12px/16px var(--ui); }

/* query window */
.dialog { position: absolute; left: 235px; top: 250px; width: 853px; height: 514px; border: 1px solid #3a8ee6; background: var(--face); box-shadow: 0 2px 16px rgba(0,0,0,.35); display: flex; flex-direction: column; font-family: var(--song); }
.dtitle { height: 30px; flex: none; background: #fff; display: flex; align-items: center; gap: 5px; padding-left: 8px; font-family: var(--ui); }
.dtabs { height: 27px; flex: none; display: flex; align-items: flex-start; }
.dtabs > button { height: 20px; min-width: 52px; margin-right: 1px; padding: 0 10px; border-right: 1px solid #888; font-weight: 400; text-align: left; }
.dtabs > button:first-child { padding-left: 7px; }
.dtabs > .on { padding: 0 5px; }
.dtabs .on span { display: block; height: 20px; padding: 0 7px 0 5px; border: solid #777; border-width: 1px 0 0 2px; background: #fafafa; }
.cmds { margin-left: auto; padding-top: 3px; display: flex; gap: 4px; }
.cmds button { width: 73px; font-family: var(--ui); }
.cmds button:last-child { width: 70px; border-right: 0; }
.dbody { flex: 1; min-height: 0; display: flex; gap: 4px; padding-bottom: 1px; }
.dleft { width: 215px; display: flex; flex-direction: column; }
.combo { position: relative; height: 20px; --w: 1; }
.combo select { appearance: none; width: 100%; height: 20px; border: 1px solid #adadad; border-radius: 0; background: #e1e1e1; padding: 0 18px 0 2px; }
.combo svg { position: absolute; right: 0; top: 2px; width: 16px; height: 16px; }
.qtabs { height: 22px; display: flex; align-items: flex-end; }
.qtabs button { height: 19px; padding: 0 5px; border: 1px solid #dcdcdc; border-bottom: 0; font-weight: 400; }
.qtabs .on { height: 21px; padding: 0 6px; background: #fff; }
.qpanel { flex: 1; min-height: 0; border: 1px solid #dcdcdc; border-left: 0; padding: 3px 1px 0 4px; display: flex; flex-direction: column; }
.treebox { flex: 1; min-height: 0; border: 1px solid #828790; background: #fff; padding: 1px; display: grid; grid-template: 1fr 16px / 1fr 18px; }
.tree { overflow: hidden; padding-left: 4px; white-space: nowrap; }
.row { display: flex; align-items: center; height: 16px; gap: 3px; }
.shut { --c: #a6a6a6; }
.lv1 { margin-left: 19px; }
.lv2 { margin-left: 8px; padding-left: 11px; background: repeating-linear-gradient(#888 0 1px, transparent 1px 2px) left top / 1px 100% no-repeat; }
.lv3 { margin-left: 19px; background: repeating-linear-gradient(#888 0 1px, transparent 1px 2px) 8px 0 / 1px 248px no-repeat; }
.lv3 li { display: flex; align-items: center; height: 16px; padding-left: 8px; }
.lv3 li::before { content: ""; width: 9px; flex: none; border-top: 1px dotted #888; }
.lv3 span { flex: none; padding-left: 2px; }
.vscroll { background: var(--face); display: flex; flex-direction: column; padding-right: 2px; }
.vscroll i { height: 228px; margin-top: auto; background: #cdcdcd; }
.vscroll .ic:last-child { margin-top: 12px; }
.treebox .hscroll { grid-column: 1 / 3; padding-right: 18px; }
.treebox .hscroll i { width: 98px; }
.radios { height: 39px; flex: none; display: flex; align-items: center; gap: 20px; padding-left: 11px; }
.radios label { display: flex; align-items: center; gap: 9px; }
.radios input { appearance: none; width: 11px; height: 11px; border: 1px solid #888; border-radius: 50%; background: #fff; }
.radios input:checked { background: radial-gradient(#000 0 3px, #fff 3px); }
.dright { flex: 1; }
.dright .grid { width: 554px; }

/* red pen marks */
.marks { position: absolute; left: 170px; top: 270px; width: 320px; height: 410px; pointer-events: none; }
```
